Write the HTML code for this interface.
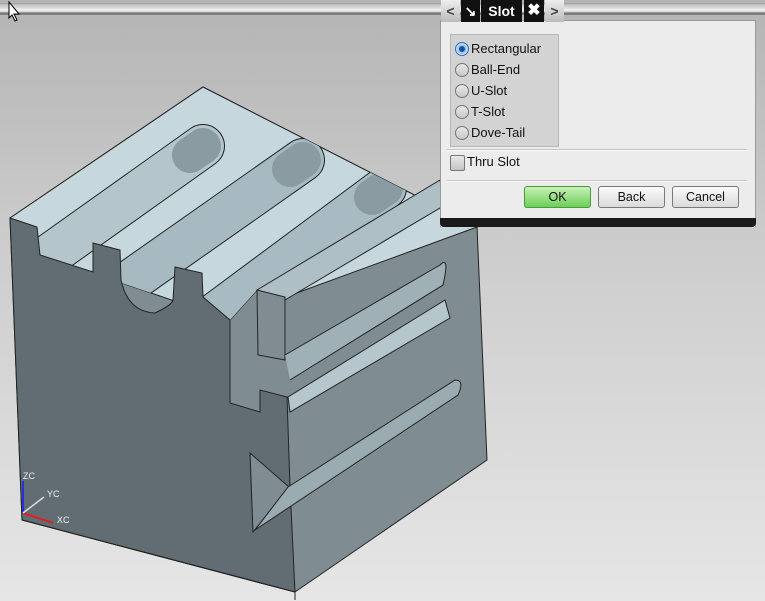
<!DOCTYPE html>
<html><head><style>
body{margin:0;width:765px;height:601px;overflow:hidden;position:relative;font-family:"Liberation Sans",sans-serif;background:linear-gradient(#b4b4b4 0px,#cdcdcd 250px,#e6e6e6 601px);}
.bar{position:absolute;left:0;top:3px;width:765px;height:12px;background:linear-gradient(#9a9a9a 0,#c8c8c8 2px,#dcdcdc 5px,#f4f4f4 7px,#cfcfcf 9px,#6e6e6e 10px,#8a8a8a 12px);}
.dlg{position:absolute;left:440px;top:20px;width:314px;height:206px;background:#ececec;border:1px solid #9a9a9a;border-bottom:none;}
.dlgb{position:absolute;left:440px;top:218px;width:316px;height:9px;background:#1a1a1a;border-radius:0 0 4px 4px;}
.tab{position:absolute;top:0;height:22px;color:#fff;font-weight:bold;font-size:14px;line-height:22px;text-align:center;}
.grp{position:absolute;left:450px;top:34px;width:107px;height:111px;background:#d3d3d3;border:1px solid #b8b8b8;}
.r{position:absolute;left:455px;font-size:13px;color:#111;height:18px;line-height:18px;}
.r i{display:inline-block;width:14px;height:14px;border-radius:50%;border:1px solid #777;background:linear-gradient(#e8e8e8,#c8c8c8);vertical-align:-3px;margin-right:2px;box-sizing:border-box;}
.sep{position:absolute;left:447px;width:300px;height:1px;background:#c4c4c4;border-bottom:1px solid #fafafa;}
.btn{position:absolute;top:186px;width:65px;height:20px;border:1px solid #7a7a7a;border-radius:3px;font-size:12.5px;text-align:center;line-height:20px;color:#111;background:linear-gradient(#fbfbfb,#dadada);}
</style></head><body>
<div class="bar"></div>
<svg style="position:absolute;left:0;top:0" width="765" height="601">
<defs><clipPath id="tc"><polygon points="10,218 203,87 477,227 283,298 257,290 230,320 40,255"/></clipPath></defs>
<polygon points="10,218 203,87 477,227 487,460 295,592 22,520" fill="#7f8d92" stroke="#222" stroke-width="1"/>
<polygon points="10,218 203,87 477,227 283,298 257,290 230,320 40,255" fill="#c6d7dd" stroke="#222" stroke-width="1"/>
<g fill="none" clip-path="url(#tc)">
<path d="M40,262 L203,146" stroke="#222" stroke-width="44" stroke-linecap="round"/>
<path d="M40,262 L203,146" stroke="#b4c5cc" stroke-width="42" stroke-linecap="round"/>
<path d="M203,146 L190,155" stroke="#8a9ba2" stroke-width="36" stroke-linecap="round"/>
<path d="M125,285 L303,160" stroke="#222" stroke-width="44" stroke-linecap="round"/>
<path d="M125,285 L303,160" stroke="#a8bac1" stroke-width="42" stroke-linecap="round"/>
<path d="M303,160 L290,169" stroke="#8a9ba2" stroke-width="36" stroke-linecap="round"/>
<path d="M210,318 L385,188" stroke="#222" stroke-width="44" stroke-linecap="round"/>
<path d="M210,318 L385,188" stroke="#a9bbc2" stroke-width="42" stroke-linecap="round"/>
<path d="M385,188 L372,197" stroke="#8a9ba2" stroke-width="36" stroke-linecap="round"/>
</g>
<path d="M10,218 L37,227 L40,255 L93,272 L93,243 L120,250 L121,280 Q128,312 155,313 Q172,305 173,300 L175,267 L202,273 L203,297 L230,320 L230,403 L260,412 L260,390 L287,397 L290,487 L295,592 L22,520 Z" fill="#616d72" stroke="#222" stroke-width="1"/>
<polygon points="250,453 289,487 253,532" fill="#7f8d92" stroke="#222"/>
<polygon points="257,290 440,180 445,205 285,300" fill="#aebfc5" stroke="#222"/>
<polygon points="257,290 285,297 285,360 258,355" fill="#7f8d92" stroke="#222"/>
<polygon points="288,397 445,300 450,318 290,412" fill="#b5c6cc" stroke="#222"/>
<path d="M285,355 L440,265 Q450,255 443,285 L290,380" fill="#9fb1b7" stroke="#222"/>
<path d="M288,487 L455,380 Q465,380 458,395 L255,530 Z" fill="#9aacb2" stroke="#222"/>
<polyline points="22,520 295,592 295,600" fill="none" stroke="#222"/>
<line x1="23" y1="481" x2="23" y2="513" stroke="#2233dd" stroke-width="2"/>
<line x1="23" y1="513" x2="53" y2="523" stroke="#e02020" stroke-width="2"/>
<line x1="23" y1="513" x2="44" y2="497" stroke="#ddd" stroke-width="1.5"/>
<text x="23" y="479" font-size="9" fill="#eee" font-family="Liberation Sans">ZC</text>
<text x="47" y="497" font-size="9" fill="#eee" font-family="Liberation Sans">YC</text>
<text x="57" y="523" font-size="9" fill="#eee" font-family="Liberation Sans">XC</text>
<path d="M9,2 L9,18 L12,15 L15,21 L17,20 L14,14 L19,14 Z" fill="#fff" stroke="#000" stroke-width="1"/>
</svg>
<div class="dlg"></div>
<div class="dlgb"></div>
<div class="tab" style="left:441px;width:19px;background:linear-gradient(#eee,#bbb);color:#444;">&lt;</div>
<div class="tab" style="left:461px;width:19px;background:#111;">&#8600;</div>
<div class="tab" style="left:481px;width:41px;background:#111;">Slot</div>
<div class="tab" style="left:524px;width:20px;background:#111;font-size:16px;">&#10006;</div>
<div class="tab" style="left:545px;width:19px;background:linear-gradient(#eee,#bbb);color:#444;">&gt;</div>
<div class="grp"></div>
<div class="r" style="top:40px"><i style="background:radial-gradient(#1a4fa0 30%,#9cc8f0 40%,#e6f2ff);border-color:#3a6fb0"></i>Rectangular</div>
<div class="r" style="top:61px"><i></i>Ball-End</div>
<div class="r" style="top:82px"><i></i>U-Slot</div>
<div class="r" style="top:103px"><i></i>T-Slot</div>
<div class="r" style="top:124px"><i></i>Dove-Tail</div>
<div class="sep" style="top:149px"></div>
<div style="position:absolute;left:450px;top:155px;width:13px;height:14px;border:1px solid #777;border-radius:2px;background:linear-gradient(#e8e8e8,#c4c4c4)"></div>
<div class="r" style="left:467px;top:153px">Thru Slot</div>
<div class="sep" style="top:180px"></div>
<div class="btn" style="left:524px;background:linear-gradient(#c8f0b8,#6ccf58);border-color:#4a9a3a">OK</div>
<div class="btn" style="left:598px">Back</div>
<div class="btn" style="left:672px">Cancel</div>
</body></html>
